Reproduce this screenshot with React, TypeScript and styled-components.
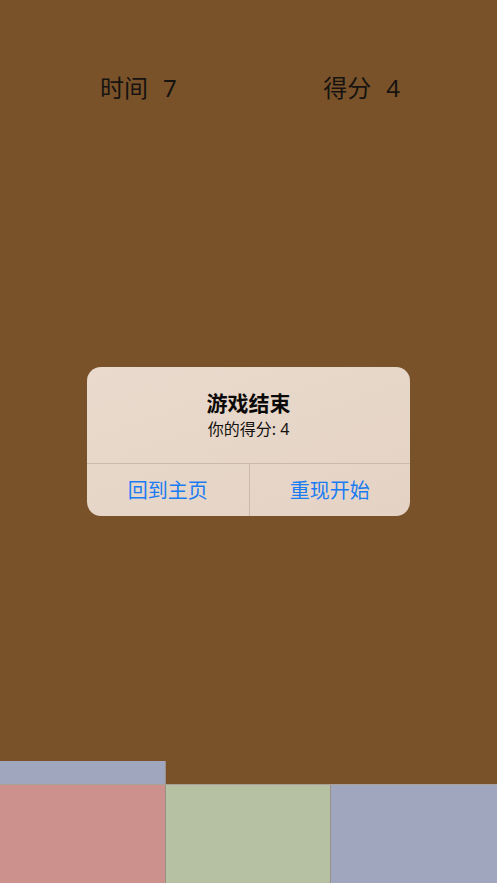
import React from 'react';
import styled, { createGlobalStyle } from 'styled-components';

const GlobalStyle = createGlobalStyle`
  html, body {
    margin: 0;
    padding: 0;
    background: #79522a;
  }
  * {
    box-sizing: border-box;
  }
`;

const FONT = `'Noto Sans', 'Noto Sans CJK SC', sans-serif`;

interface Tile {
  color: string;
}

const topRow: (Tile | null)[] = [{ color: '#a0a6bd' }, null, null];
const bottomRow: Tile[] = [
  { color: '#cc918d' },
  { color: '#b5c1a2' },
  { color: '#a0a6bd' }
];

const App: React.FC = () => (
  <>
    <GlobalStyle />
    <Screen>
      <Header>
        <Stat>
          <Label>时间</Label>
          <Value>7</Value>
        </Stat>
        <Stat>
          <Label>得分</Label>
          <Value>4</Value>
        </Stat>
      </Header>
      <Spacer />
      <Board>
        <PartialRow>
          {topRow.map((t, i) => (
            <Cell key={i} color={t ? t.color : undefined} />
          ))}
        </PartialRow>
        <FullRow>
          {bottomRow.map((t, i) => (
            <Cell key={i} color={t.color} />
          ))}
        </FullRow>
      </Board>

      <Overlay>
        <Alert>
          <AlertBody>
            <Title>游戏结束</Title>
            <Message>你的得分: 4</Message>
          </AlertBody>
          <Actions>
            <Action>回到主页</Action>
            <Action>重现开始</Action>
          </Actions>
        </Alert>
      </Overlay>
    </Screen>
  </>
);

export default App;

const Screen = styled.div`
  position: relative;
  width: 497px;
  height: 883px;
  display: flex;
  flex-direction: column;
  background: #79522a;
  font-family: ${FONT};
  overflow: hidden;
`;

const Header = styled.div`
  display: flex;
  justify-content: space-between;
  padding: 71px 97px 0 100px;
`;

const Stat = styled.div`
  display: flex;
  align-items: center;
  gap: 15px;
  font-size: 24px;
  line-height: 34px;
  color: #161310;
`;

const Label = styled.span``;

const Value = styled.span``;

const Spacer = styled.div`
  flex: 1;
`;

const Board = styled.div`
  display: flex;
  flex-direction: column;
`;

const Row = styled.div`
  display: grid;
  grid-template-columns: repeat(3, 1fr);
`;

const PartialRow = styled(Row)`
  height: 23px;
`;

const FullRow = styled(Row)`
  height: 99px;
  border-top: 1px solid #a9a09a;
`;

const Cell = styled.div<{ color?: string }>`
  background: ${p => p.color || 'transparent'};
  ${p => (p.color ? 'box-shadow: inset -1px 0 0 #9a8f86;' : '')}

  &:last-child {
    box-shadow: none;
  }
`;

const Overlay = styled.div`
  position: absolute;
  inset: 0;
  display: flex;
  align-items: center;
  justify-content: center;
`;

const Alert = styled.div`
  width: 323px;
  border-radius: 14px;
  background: linear-gradient(160deg, #e9dacd 0%, #e4d3c5 100%);
  overflow: hidden;
`;

const AlertBody = styled.div`
  padding: 24px 16px 24px;
  text-align: center;
`;

const Title = styled.div`
  font-size: 21px;
  line-height: 24px;
  font-weight: 700;
  color: #0c0a08;
`;

const Message = styled.div`
  margin-top: 4px;
  font-size: 16px;
  line-height: 20px;
  color: #14110e;
`;

const Actions = styled.div`
  display: grid;
  grid-template-columns: 1fr 1fr;
  border-top: 1px solid #cbb9aa;
`;

const Action = styled.div`
  height: 52px;
  display: flex;
  align-items: center;
  justify-content: center;
  padding-bottom: 1px;
  font-size: 20px;
  color: #1a7cf3;

  & + & {
    border-left: 1px solid #cbb9aa;
  }
`;
